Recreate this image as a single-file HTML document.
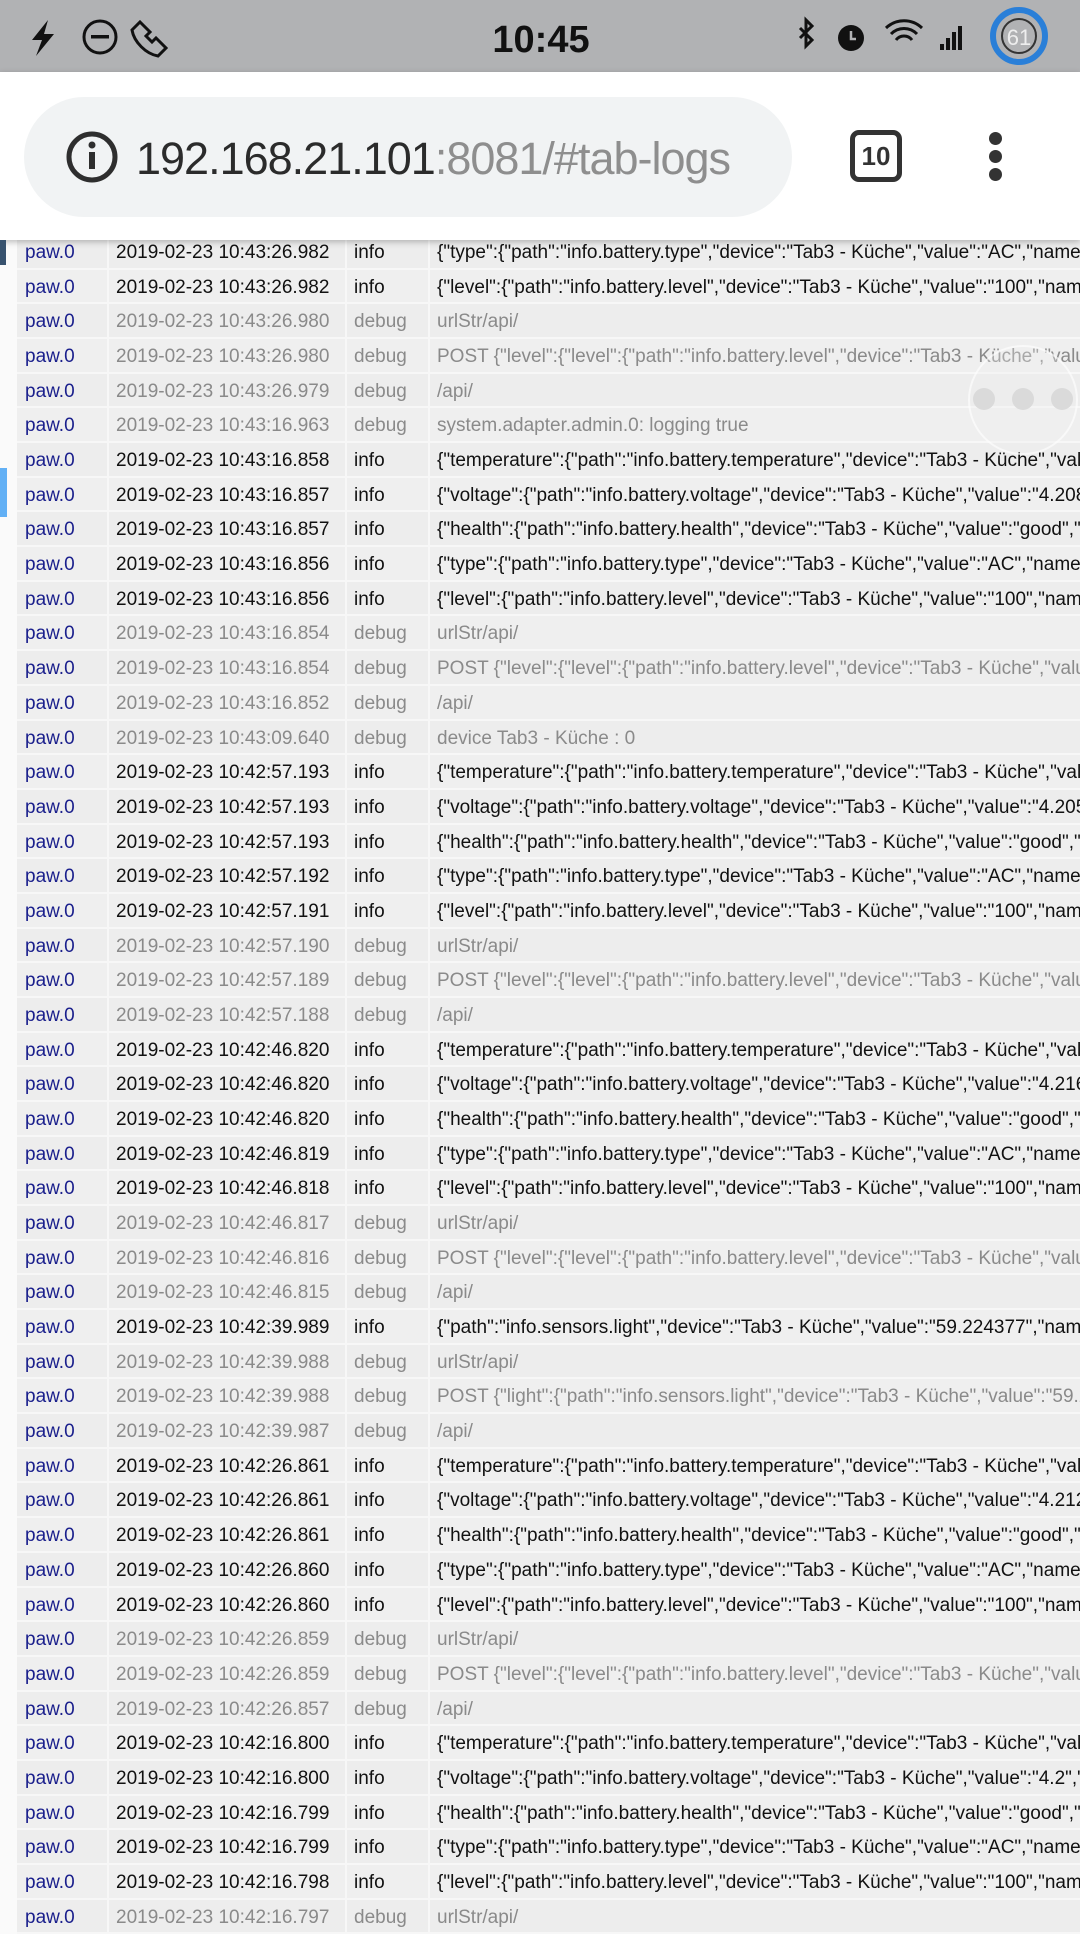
<!DOCTYPE html>
<html><head><meta charset="utf-8"><style>
*{margin:0;padding:0;box-sizing:border-box}
body{width:1080px;height:1920px;overflow:hidden;background:#fafafa;font-family:"Liberation Sans",sans-serif;position:relative}
#sb{position:absolute;left:0;top:0;width:1080px;height:72px;background:#b1b2b4}
#tb{position:absolute;left:0;top:72px;width:1080px;height:168px;background:#fff;box-shadow:0 2px 6px rgba(0,0,0,.25);z-index:5}
#pill{position:absolute;left:24px;top:25px;width:768px;height:120px;border-radius:60px;background:#f1f3f4}
.url{position:absolute;left:112px;top:36px;font-size:45px;letter-spacing:-1px;color:#2b2b2b}
.url span{color:#8e8e8e}
#rows{position:absolute;left:0;top:0;width:1080px;height:1920px}
.r{position:absolute;left:17px;right:0;height:34.68px;border-bottom:2px solid #f7f7f7;font-size:19px;white-space:nowrap;overflow:hidden}
.r.o{background:#ededed}.r.e{background:#efefef}
.r div{position:absolute;top:7px}
.c1{left:8px;color:#1a1f8c}.c2{left:99px}.c3{left:337px}.c4{left:420px}
.b1,.b2,.b3{position:absolute;top:0;bottom:0;width:2px;background:#f7f7f7}
.b1{left:90px}.b2{left:328px}.b3{left:411px}
.d{color:#8a8a8a}.i{color:#111}
</style></head><body>
<div id="sb">
<svg width="1080" height="72" style="position:absolute;left:0;top:0">
<path d="M48 20 L32 40 L42 40 L36 56 L54 34 L44 34 Z" fill="#111"/>
<circle cx="100" cy="37" r="16" fill="none" stroke="#111" stroke-width="3"/><rect x="91" y="35" width="18" height="3.5" fill="#111"/>
<path d="M140 22 l10 10 -4 4 6 6 4 -4 10 10 -8 8 C146 54 134 42 132 30 Z" fill="none" stroke="#111" stroke-width="3"/>
<text x="541" y="52" font-size="38" font-weight="bold" text-anchor="middle" fill="#111" font-family="Liberation Sans">10:45</text>
<path d="M800 28 l12 12 -6 6 V20 l6 6 -12 12" fill="none" stroke="#111" stroke-width="3"/>
<circle cx="851" cy="38" r="13" fill="#111"/><path d="M851 31 v8 h5" stroke="#b1b2b4" stroke-width="2.5" fill="none"/>
<path d="M886 28 a26 26 0 0 1 36 0 M891 34 a18 18 0 0 1 26 0 M896 40 a10 10 0 0 1 16 0" stroke="#111" stroke-width="3" fill="none"/>
<path d="M940 50 h4 v-6 h-4z M946 50 h4 v-12 h-4z M952 50 h4 v-18 h-4z M958 50 h4 v-24 h-4z" fill="#111"/>
<circle cx="1019" cy="36" r="26" fill="none" stroke="#2a7fd8" stroke-width="6"/>
<circle cx="1019" cy="36" r="17" fill="none" stroke="#333" stroke-width="2"/>
<text x="1019" y="45" font-size="22" text-anchor="middle" fill="#eee" font-family="Liberation Sans">61</text>
</svg></div>
<div id="tb"><div id="pill">
<svg width="60" height="60" style="position:absolute;left:38px;top:30px"><circle cx="30" cy="30" r="23" fill="none" stroke="#2e2e2e" stroke-width="5"/><rect x="27" y="25" width="6" height="17" fill="#2e2e2e"/><circle cx="30" cy="18" r="3.5" fill="#2e2e2e"/></svg>
<div class="url">192.168.21.101<span>:8081/#tab-logs</span></div></div>
<div style="position:absolute;left:850px;top:58px;width:52px;height:52px;border:5px solid #333;border-radius:9px;font-size:26px;font-weight:bold;text-align:center;line-height:42px;color:#333">10</div>
<div style="position:absolute;left:989px;top:60px;width:13px;height:13px;border-radius:50%;background:#333"></div>
<div style="position:absolute;left:989px;top:78px;width:13px;height:13px;border-radius:50%;background:#333"></div>
<div style="position:absolute;left:989px;top:96px;width:13px;height:13px;border-radius:50%;background:#333"></div>
</div>
<div style="position:absolute;left:0;top:240px;width:6px;height:25px;background:#37526e;z-index:6"></div>
<div style="position:absolute;left:0;top:468px;width:7px;height:49px;background:#62b0f5;z-index:6"></div>
<div id="rows"></div>
<div style="position:absolute;left:968px;top:345px;width:110px;height:110px;border-radius:50%;border:2px solid rgba(255,255,255,.6);background:rgba(240,240,240,.3)"></div>
<div style="position:absolute;left:973px;top:388px;width:22px;height:22px;border-radius:50%;background:#dadada"></div>
<div style="position:absolute;left:1012px;top:388px;width:22px;height:22px;border-radius:50%;background:#dadada"></div>
<div style="position:absolute;left:1051px;top:388px;width:22px;height:22px;border-radius:50%;background:#dadada"></div>
<script>
var K='"device":"Tab3 - Küche","value":';
var T=function(t){return '{"temperature":{"path":"info.battery.temperature",'+K+'"'+t+'"'};
var R=[
['43:26.982','i','{"type":{"path":"info.battery.type",'+K+'"AC","namespace"'],
['43:26.982','i','{"level":{"path":"info.battery.level",'+K+'"100","namespace"'],
['43:26.980','d','urlStr/api/'],
['43:26.980','d','POST {"level":{"level":{"path":"info.battery.level",'+K+'"100"'],
['43:26.979','d','/api/'],
['43:16.963','d','system.adapter.admin.0: logging true'],
['43:16.858','i',T('25')],
['43:16.857','i','{"voltage":{"path":"info.battery.voltage",'+K+'"4.208","n'],
['43:16.857','i','{"health":{"path":"info.battery.health",'+K+'"good","namespace"'],
['43:16.856','i','{"type":{"path":"info.battery.type",'+K+'"AC","namespace"'],
['43:16.856','i','{"level":{"path":"info.battery.level",'+K+'"100","namespace"'],
['43:16.854','d','urlStr/api/'],
['43:16.854','d','POST {"level":{"level":{"path":"info.battery.level",'+K+'"100"'],
['43:16.852','d','/api/'],
['43:09.640','d','device Tab3 - Küche : 0'],
['42:57.193','i',T('25')],
['42:57.193','i','{"voltage":{"path":"info.battery.voltage",'+K+'"4.205","n'],
['42:57.193','i','{"health":{"path":"info.battery.health",'+K+'"good","namespace"'],
['42:57.192','i','{"type":{"path":"info.battery.type",'+K+'"AC","namespace"'],
['42:57.191','i','{"level":{"path":"info.battery.level",'+K+'"100","namespace"'],
['42:57.190','d','urlStr/api/'],
['42:57.189','d','POST {"level":{"level":{"path":"info.battery.level",'+K+'"100"'],
['42:57.188','d','/api/'],
['42:46.820','i',T('25')],
['42:46.820','i','{"voltage":{"path":"info.battery.voltage",'+K+'"4.216","n'],
['42:46.820','i','{"health":{"path":"info.battery.health",'+K+'"good","namespace"'],
['42:46.819','i','{"type":{"path":"info.battery.type",'+K+'"AC","namespace"'],
['42:46.818','i','{"level":{"path":"info.battery.level",'+K+'"100","namespace"'],
['42:46.817','d','urlStr/api/'],
['42:46.816','d','POST {"level":{"level":{"path":"info.battery.level",'+K+'"100"'],
['42:46.815','d','/api/'],
['42:39.989','i','{"path":"info.sensors.light",'+K+'"59.224377","namespace"'],
['42:39.988','d','urlStr/api/'],
['42:39.988','d','POST {"light":{"path":"info.sensors.light",'+K+'"59.224377"'],
['42:39.987','d','/api/'],
['42:26.861','i',T('25')],
['42:26.861','i','{"voltage":{"path":"info.battery.voltage",'+K+'"4.212","n'],
['42:26.861','i','{"health":{"path":"info.battery.health",'+K+'"good","namespace"'],
['42:26.860','i','{"type":{"path":"info.battery.type",'+K+'"AC","namespace"'],
['42:26.860','i','{"level":{"path":"info.battery.level",'+K+'"100","namespace"'],
['42:26.859','d','urlStr/api/'],
['42:26.859','d','POST {"level":{"level":{"path":"info.battery.level",'+K+'"100"'],
['42:26.857','d','/api/'],
['42:16.800','i',T('25')],
['42:16.800','i','{"voltage":{"path":"info.battery.voltage",'+K+'"4.2","name'],
['42:16.799','i','{"health":{"path":"info.battery.health",'+K+'"good","namespace"'],
['42:16.799','i','{"type":{"path":"info.battery.type",'+K+'"AC","namespace"'],
['42:16.798','i','{"level":{"path":"info.battery.level",'+K+'"100","namespace"'],
['42:16.797','d','urlStr/api/']
];
var h='';
R.forEach(function(r,k){
var top=(235+k*34.68).toFixed(2);
h+='<div class="r '+r[1]+' '+(k%2?'e':'o')+'" style="top:'+top+'px"><span class="b1"></span><span class="b2"></span><span class="b3"></span><div class="c1">paw.0</div><div class="c2">2019-02-23 10:'+r[0]+'</div><div class="c3">'+(r[1]=='i'?'info':'debug')+'</div><div class="c4"></div></div>';
});
document.getElementById('rows').innerHTML=h;
var m=document.querySelectorAll('#rows .c4');
R.forEach(function(r,k){m[k].textContent=r[2];});
</script>
</body></html>
